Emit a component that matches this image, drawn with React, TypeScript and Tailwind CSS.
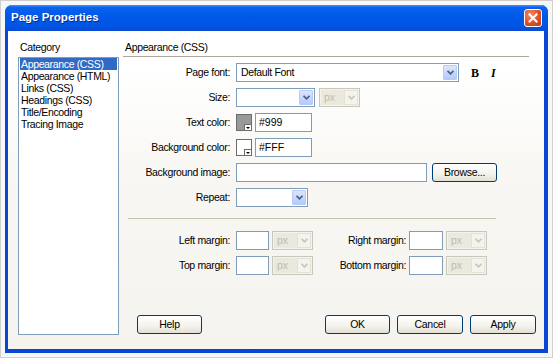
import React from "react";

const font = { fontFamily: '"Liberation Sans", Arial, sans-serif' };

function Chevron({ color }: { color: string }) {
  return (
    <svg width="7" height="5" viewBox="0 0 7 5">
      <path d="M0.5 0.8 L3.5 3.8 L6.5 0.8" fill="none" stroke={color} strokeWidth="1.8" />
    </svg>
  );
}

function Select({ w, value }: { w: string; value?: string }) {
  return (
    <div className={`${w} flex h-[19px] items-center border border-[#7f9db9] bg-white p-px`}>
      <span className="flex-1 whitespace-nowrap pl-[3px] text-[10.5px] leading-none tracking-[-0.35px] text-black">{value}</span>
      <div className="flex h-full w-[14px] items-center justify-center rounded-[1px] border border-[#b8cbf6] bg-[linear-gradient(to_bottom,#dbe6fd,#b5cafa)]">
        <Chevron color="#4d6185" />
      </div>
    </div>
  );
}

function PxSelect() {
  return (
    <div className="flex h-[19px] w-[41px] items-center border border-[#c9c7ba] bg-[#f4f3ee] p-px">
      <span className="flex h-full flex-1 items-center bg-[#ebe9dd] pl-[3px] text-[10.5px] leading-none text-[#bdbbaf]">px</span>
      <div className="flex h-full w-[14px] items-center justify-center border border-[#e4e2d7] bg-[#f4f3ee]">
        <Chevron color="#c9c7ba" />
      </div>
    </div>
  );
}

function Input({ w, value }: { w: string; value?: string }) {
  return (
    <div className={`${w} flex h-[19px] items-center border border-[#7f9db9] bg-white pl-[3px] text-[10.5px] leading-none text-black`}>
      {value}
    </div>
  );
}

function Swatch({ fill }: { fill: string }) {
  return (
    <div className="relative h-[17px] w-[16px] border border-[#6d6d6d]" style={{ background: fill }}>
      <div className="absolute bottom-0 right-0 flex h-[6px] w-[7px] items-center justify-center border-l border-t border-[#6d6d6d] bg-white">
        <div className="h-0 w-0 border-l-[2px] border-r-[2px] border-t-[2px] border-l-transparent border-r-transparent border-t-black" />
      </div>
    </div>
  );
}

function Button({ w, label }: { w: string; label: string }) {
  return (
    <div className={`${w} flex h-[19px] items-center justify-center rounded-[3px] border border-[#003c74] bg-[linear-gradient(to_bottom,#ffffff,#f3f2ec_60%,#e3e0d2)] text-[10.5px] leading-none tracking-[-0.3px] text-black`}>
      {label}
    </div>
  );
}

function Label({ w, text }: { w: string; text: string }) {
  return (
    <span className={`${w} whitespace-nowrap text-right text-[10.5px] leading-none tracking-[-0.35px] text-black`}>{text}</span>
  );
}

function Row({ label, children }: { label: string; children: React.ReactNode }) {
  return (
    <div className="flex h-[19px] items-center gap-[6px]">
      <Label w="w-[107px]" text={label} />
      {children}
    </div>
  );
}

export default function App() {
  const categories = [
    "Appearance (CSS)",
    "Appearance (HTML)",
    "Links (CSS)",
    "Headings (CSS)",
    "Title/Encoding",
    "Tracing Image",
  ];

  return (
    <div className="h-[358px] w-[553px] border border-[#cfcfcf] bg-[#f7f7f7] p-[4px]" style={font}>
      <div className="flex h-[348px] w-[543px] flex-col overflow-hidden rounded-t-[7px] bg-[#0a45d6]">
        {/* title bar */}
        <div className="flex h-[26px] shrink-0 items-center justify-between bg-[linear-gradient(to_bottom,#3d93ff_0%,#0a62ec_10%,#0058e8_45%,#0056e4_80%,#0a4ad4_100%)] pl-[6px] pr-[6px]">
          <span className="text-[11.5px] font-bold text-white [text-shadow:1px_1px_0_#0a2a8a]">Page Properties</span>
          <div className="flex h-[18px] w-[18px] items-center justify-center rounded-[3px] border border-white bg-[radial-gradient(circle_at_35%_30%,#f28c6a,#de4a22_60%,#c0381a)]">
            <svg width="10" height="10" viewBox="0 0 10 10">
              <path d="M1.5 1.5 L8.5 8.5 M8.5 1.5 L1.5 8.5" stroke="white" strokeWidth="2" strokeLinecap="square" />
            </svg>
          </div>
        </div>

        {/* body */}
        <div className="mb-[4px] ml-[3px] mr-[4px] flex flex-1 bg-[linear-gradient(to_bottom,#ffffff_0%,#ffffff_12%,#f8f7f3_45%,#f4f3ee_100%)] pl-[10px] pt-[10px]">
          {/* left column */}
          <div className="flex w-[101px] flex-col">
            <span className="pl-[2px] text-[10.5px] leading-[13px] tracking-[-0.35px] text-black">Category</span>
            <div className="mt-[3px] flex h-[278px] flex-col border border-[#7f9db9] bg-white px-px">
              {categories.map((c, i) => (
                <div
                  key={c}
                  className={`h-[12px] whitespace-nowrap pl-[1px] text-[10.5px] leading-[12px] tracking-[-0.35px] ${i === 0 ? "bg-[#316ac5] text-white" : "text-black"}`}
                >
                  {c}
                </div>
              ))}
            </div>
          </div>

          {/* right column */}
          <div className="ml-[4px] flex flex-1 flex-col">
            <span className="pl-[2px] text-[10.5px] leading-[13px] tracking-[-0.35px] text-black">Appearance (CSS)</span>
            <div className="mt-[2px] h-px w-[406px] bg-[#aca899]" />

            <div className="mt-[6px] flex flex-col gap-[6px]">
              <Row label="Page font:">
                <Select w="w-[223px]" value="Default Font" />
                <span className="ml-[6px] text-[12px] font-bold leading-none text-black" style={{ fontFamily: '"Liberation Serif", serif' }}>
                  B
                </span>
                <span className="ml-[6px] text-[12px] font-bold italic leading-none text-black" style={{ fontFamily: '"Liberation Serif", serif' }}>
                  I
                </span>
              </Row>
              <Row label="Size:">
                <div className="flex gap-[4px]">
                  <Select w="w-[79px]" />
                  <PxSelect />
                </div>
              </Row>
              <Row label="Text color:">
                <div className="flex items-center gap-[3px]">
                  <Swatch fill="#999" />
                  <Input w="w-[57px]" value="#999" />
                </div>
              </Row>
              <Row label="Background color:">
                <div className="flex items-center gap-[3px]">
                  <Swatch fill="#fff" />
                  <Input w="w-[57px]" value="#FFF" />
                </div>
              </Row>
              <Row label="Background image:">
                <div className="flex items-center gap-[5px]">
                  <Input w="w-[191px]" />
                  <Button w="w-[65px]" label="Browse..." />
                </div>
              </Row>
              <Row label="Repeat:">
                <Select w="w-[72px]" />
              </Row>
            </div>

            <div className="ml-[5px] mt-[11px] h-px w-[368px] bg-[#c5c2b2]" />

            <div className="mt-[12px] flex flex-col gap-[6px]">
              {[
                ["Left margin:", "Right margin:"],
                ["Top margin:", "Bottom margin:"],
              ].map(([a, b]) => (
                <div key={a} className="flex h-[19px] items-center">
                  <Label w="w-[107px]" text={a} />
                  <div className="ml-[6px] flex gap-[3px]">
                    <Input w="w-[33px]" />
                    <PxSelect />
                  </div>
                  <Label w="w-[93px]" text={b} />
                  <div className="ml-[3px] flex gap-[3px]">
                    <Input w="w-[34px]" />
                    <PxSelect />
                  </div>
                </div>
              ))}
            </div>

            <div className="mt-[40px] flex items-center">
              <div className="ml-[14px]">
                <Button w="w-[65px]" label="Help" />
              </div>
              <div className="ml-[123px] flex gap-[7px]">
                <Button w="w-[65px]" label="OK" />
                <Button w="w-[66px]" label="Cancel" />
                <Button w="w-[66px]" label="Apply" />
              </div>
            </div>
          </div>
        </div>
      </div>
    </div>
  );
}
